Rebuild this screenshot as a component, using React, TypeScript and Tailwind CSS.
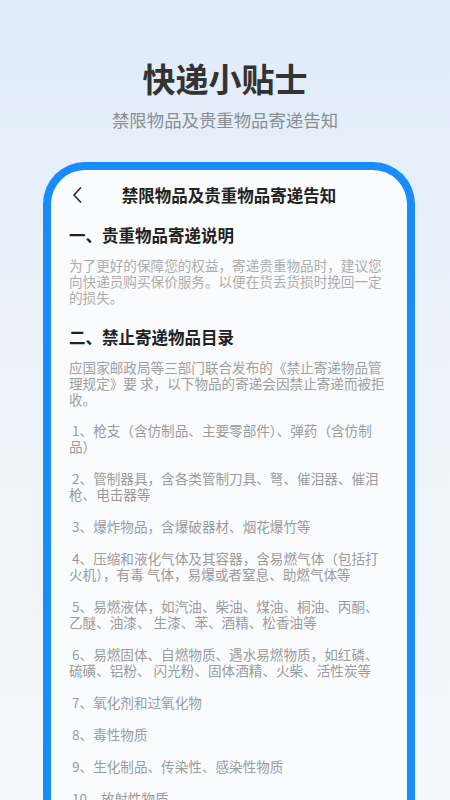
const items = [
  "1、枪支（含仿制品、主要零部件）、弹药（含仿制品）",
  "2、管制器具，含各类管制刀具、弩、催泪器、催泪枪、电击器等",
  "3、爆炸物品，含爆破器材、烟花爆竹等",
  "4、压缩和液化气体及其容器，含易燃气体（包括打火机），有毒 气体，易爆或者窒息、助燃气体等",
  "5、易燃液体，如汽油、柴油、煤油、桐油、丙酮、乙醚、油漆、 生漆、苯、酒精、松香油等",
  "6、易燃固体、自燃物质、遇水易燃物质，如红磷、硫磺、铝粉、 闪光粉、固体酒精、火柴、活性炭等",
  "7、氧化剂和过氧化物",
  "8、毒性物质",
  "9、生化制品、传染性、感染性物质",
  "10、放射性物质",
  "11、腐蚀性物质",
];

function BackIcon() {
  return (
    <svg width="12" height="18" viewBox="0 0 12 18" fill="none">
      <path d="M9.5 2 L3 9 L9.5 16" stroke="#333" strokeWidth="1.8" strokeLinecap="round" strokeLinejoin="round" />
    </svg>
  );
}

export default function App() {
  return (
    <div
      className="h-[800px] w-[450px] overflow-hidden bg-gradient-to-b from-[#e1ecf9] via-[#edf3fa] to-[#f5f7fa]"
      style={{ fontFamily: '"Noto Sans CJK SC", "Noto Sans", sans-serif' }}
    >
      <div className="flex flex-col items-center">
        <h1 className="mt-[62px] text-[33px] font-bold leading-[33px] text-[#333]">快递小贴士</h1>
        <p className="mt-[15px] text-[17.4px] leading-[20px] text-[#8a8d92]">禁限物品及贵重物品寄递告知</p>
      </div>

      <div className="ml-[43px] mt-[32px] h-[700px] w-[372px] rounded-t-[42px] border-x-[8px] border-t-[8px] border-[#1a8bfb] bg-[#fafbfc]">
        <div className="relative flex items-center justify-center pt-[14px]">
          <span className="absolute left-[20px] top-[16px]">
            <BackIcon />
          </span>
          <span className="text-[16.5px] font-bold leading-[22px] text-[#222]">禁限物品及贵重物品寄递告知</span>
        </div>

        <div className="px-[18px]">
          <h2 className="mt-[18px] text-[16.5px] font-bold leading-[22px] text-[#222]">一、贵重物品寄递说明</h2>
          <p className="mt-[11px] text-[13.6px] leading-[16px] text-[#adadad]">
            为了更好的保障您的权益，寄递贵重物品时，建议您向快递员购买保价服务。以便在货丢货损时挽回一定的损失。
          </p>

          <h2 className="mt-[21px] text-[16.5px] font-bold leading-[22px] text-[#222]">二、禁止寄递物品目录</h2>
          <p className="mt-[11px] text-[13.6px] leading-[16px] text-[#a0a0a0]">
            应国家邮政局等三部门联合发布的《禁止寄递物品管理规定》要 求，以下物品的寄递会因禁止寄递而被拒收。
          </p>

          <div className="mt-[15px] flex flex-col gap-[16px]">
            {items.map((t) => (
              <p key={t} className="indent-[3px] text-[13.6px] leading-[16px] text-[#9c9c9c]">
                {t}
              </p>
            ))}
          </div>
        </div>
      </div>
    </div>
  );
}
